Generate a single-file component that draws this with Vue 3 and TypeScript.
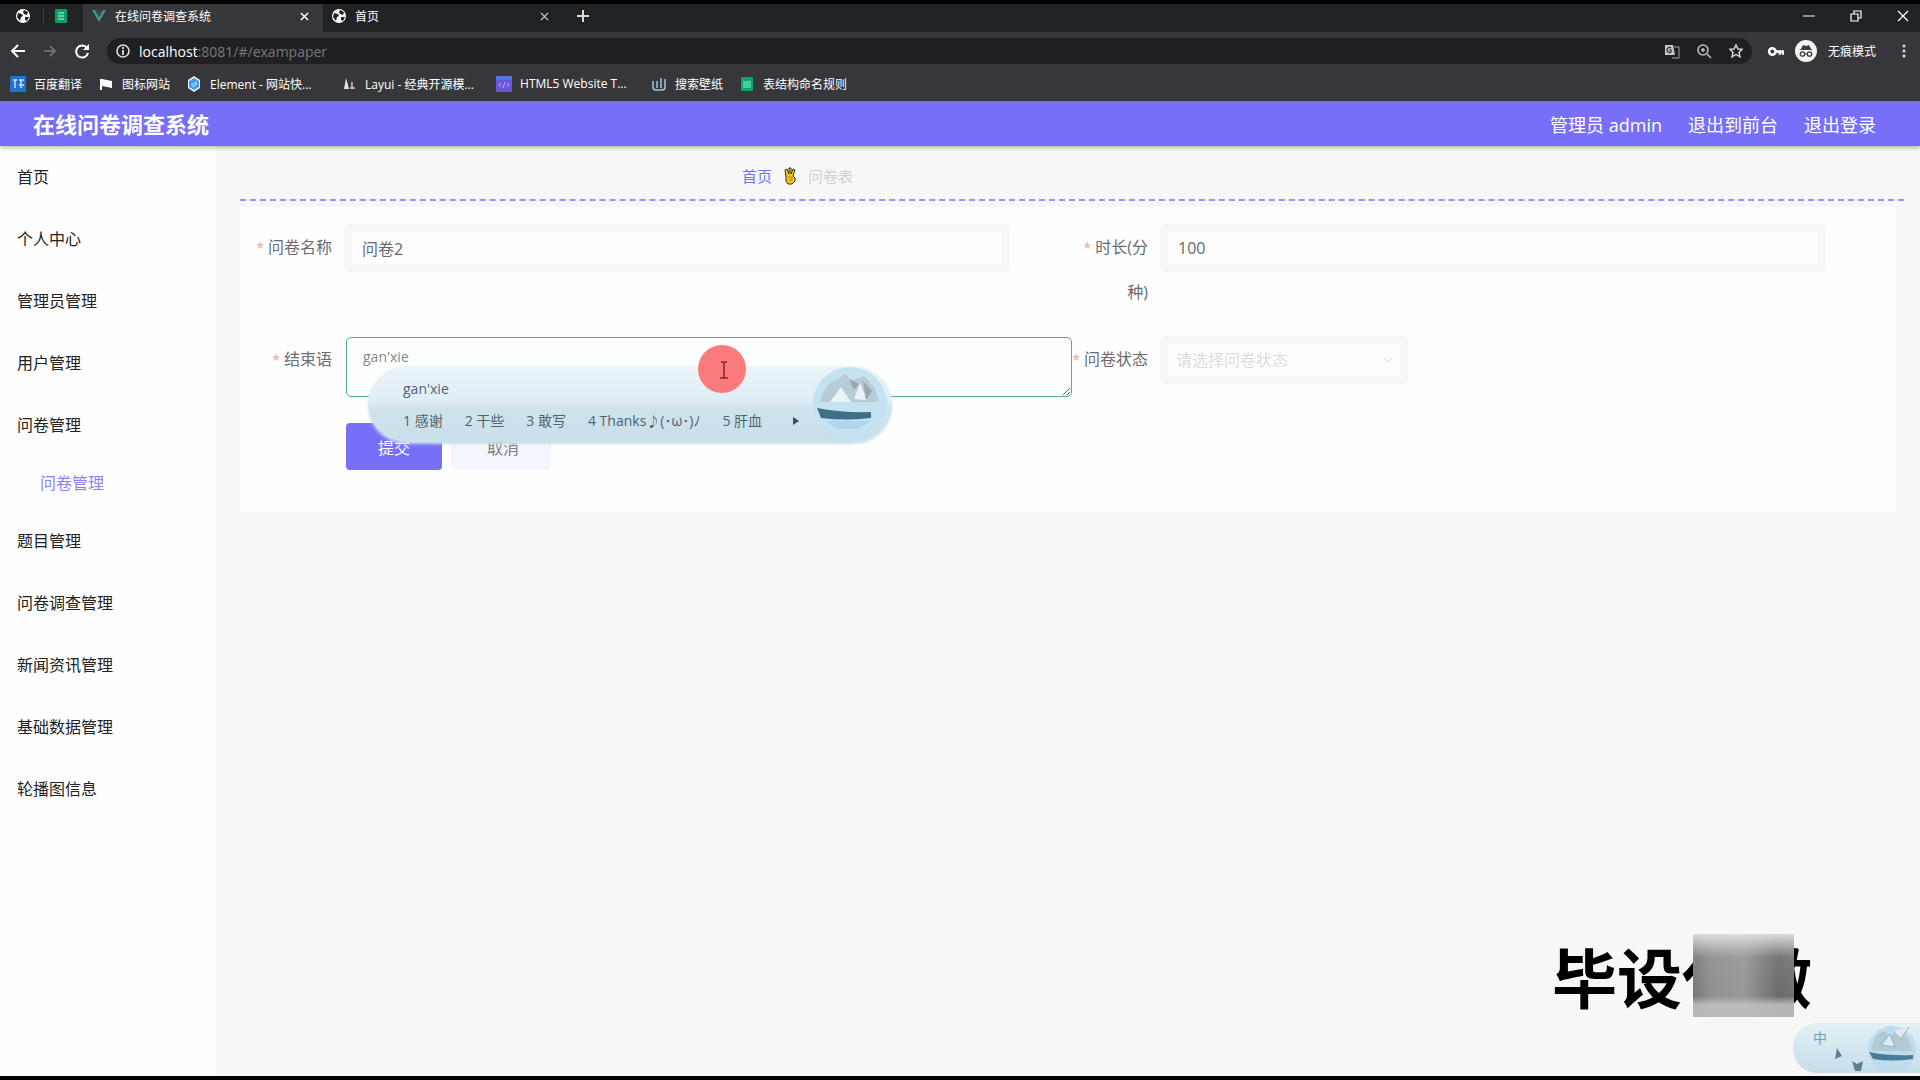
<script setup lang="ts">
import { ref } from 'vue'

interface MenuItem {
  label: string
  sub?: boolean
}
interface Bookmark {
  label: string
  icon: string
  long?: boolean
}

const menu: MenuItem[] = [
  { label: '首页' },
  { label: '个人中心' },
  { label: '管理员管理' },
  { label: '用户管理' },
  { label: '问卷管理' },
  { label: '问卷管理', sub: true },
  { label: '题目管理' },
  { label: '问卷调查管理' },
  { label: '新闻资讯管理' },
  { label: '基础数据管理' },
  { label: '轮播图信息' },
]

const bookmarks: Bookmark[] = [
  { label: '百度翻译', icon: 'baidu' },
  { label: '图标网站', icon: 'flag' },
  { label: 'Element - 网站快...', icon: 'element', long: true },
  { label: 'Layui - 经典开源模...', icon: 'layui', long: true },
  { label: 'HTML5 Website T...', icon: 'html', long: true },
  { label: '搜索壁纸', icon: 'wall' },
  { label: '表结构命名规则', icon: 'sheet' },
]

const candidates: string[] = ['感谢', '干些', '敢写', 'Thanks♪(･ω･)ﾉ', '肝血']

const paperName = ref('问卷2')
const minutes = ref('100')
const closing = ref("gan'xie")
const state = ref('')
</script>

<template>
  <div class="screen">
    <div class="browser">
      <div class="tabs">
        <span class="pin">
          <svg class="ico" viewBox="0 0 16 16"><circle cx="8" cy="8" r="7" fill="#fff" /><path d="M3 5l4 1 1 2-2 1-1 4-3-4zM9 2l4 2-1 3-3-1-1-2zM10 9l4 0-2 4-2-1z" fill="#222" /></svg>
        </span>
        <span class="pin second">
          <svg class="ico" viewBox="0 0 16 16"><rect x="2" y="1" width="12" height="14" rx="1" fill="#0b9d63" /><path d="M5 5h6M5 8h6M5 11h6" stroke="#7be0b5" stroke-width="1.5" /></svg>
        </span>
        <div class="tab active">
          <svg class="ico" viewBox="0 0 16 16"><path d="M1 2h3l4 7 4-7h3L8 14z" fill="#41987a" /><path d="M4 2h3l1 2 1-2h3L8 9z" fill="#35495e" /></svg>
          <span class="tab-title">在线问卷调查系统</span>
          <svg class="close" viewBox="0 0 10 10"><path d="M1 1l8 8M9 1l-8 8" stroke="#fff" stroke-width="1.6" /></svg>
        </div>
        <div class="tab">
          <svg class="ico" viewBox="0 0 16 16"><circle cx="8" cy="8" r="7" fill="#fff" /><path d="M3 5l4 1 1 2-2 1-1 4-3-4zM9 2l4 2-1 3-3-1-1-2zM10 9l4 0-2 4-2-1z" fill="#222" /></svg>
          <span class="tab-title">首页</span>
          <svg class="close" viewBox="0 0 10 10"><path d="M1 1l8 8M9 1l-8 8" stroke="#ccc" stroke-width="1.4" /></svg>
        </div>
        <svg class="plus" viewBox="0 0 12 12"><path d="M6 0v12M0 6h12" stroke="#ddd" stroke-width="2" /></svg>
        <div class="win">
          <svg viewBox="0 0 12 12"><path d="M0 6h12" stroke="#fff" /></svg>
          <svg viewBox="0 0 12 12"><path d="M1 4h7v7H1zM4 4V1h7v7H8" fill="none" stroke="#fff" stroke-width="1.2" /></svg>
          <svg viewBox="0 0 12 12"><path d="M1 1l10 10M11 1L1 11" stroke="#fff" stroke-width="1.3" /></svg>
        </div>
      </div>

      <div class="toolbar">
        <div class="nav">
          <svg viewBox="0 0 16 16"><path d="M15 8H2M8 2L2 8l6 6" fill="none" stroke="#fff" stroke-width="2" /></svg>
          <svg viewBox="0 0 16 16"><path d="M2 8h11M8 3l5 5-5 5" fill="none" stroke="#77797c" stroke-width="1.6" /></svg>
          <svg viewBox="0 0 16 16"><path d="M13 5a6 6 0 1 0 1 5" fill="none" stroke="#fff" stroke-width="2" /><path d="M15 1v6H9z" fill="#fff" /></svg>
        </div>
        <div class="omnibox">
          <svg class="info" viewBox="0 0 16 16"><circle cx="8" cy="8" r="6" fill="none" stroke="#ddd" stroke-width="1.6" /><path d="M8 7v5M8 4v2" stroke="#ddd" stroke-width="1.8" /></svg>
          <span class="url"><b>localhost</b>:8081/#/exampaper</span>
          <div class="actions">
            <svg viewBox="0 0 16 16"><path d="M1 2h8l2 10H1z" fill="#c4c5c7" /><path d="M10 4h5v11H8" fill="none" stroke="#a5a6a8" /><path d="M7 5a2.500 2.500 0 1 0 0 4V7H5" fill="none" stroke="#2a2a2e" stroke-width="1.200" /></svg>
            <svg viewBox="0 0 16 16"><circle cx="7" cy="7" r="5" fill="none" stroke="#bbb" stroke-width="1.6" /><path d="M11 11l4 4M5 7h4M7 5v4" stroke="#bbb" stroke-width="1.6" /></svg>
            <svg viewBox="0 0 16 16"><path d="M8 2l2 4 4 .4-3 3.100 1 4.300L8 11.500l-4 2.300 1-4.300-3-3.100L6 6z" fill="none" stroke="#ddd" stroke-width="1.4" /></svg>
          </div>
        </div>
        <div class="profile">
          <svg class="key" viewBox="0 0 16 16"><circle cx="5" cy="8" r="3" fill="none" stroke="#fff" stroke-width="2.4" /><path d="M8 8h7v3M12 8v3" fill="none" stroke="#fff" stroke-width="2.200" /></svg>
          <svg class="spy" viewBox="0 0 22 22"><circle cx="11" cy="11" r="11" fill="#f4f4f4" /><path d="M4 10h14l-2-1-2-4-3 1-3-1-2 4z" fill="#3a3b3f" /><circle cx="7.500" cy="14" r="2.200" fill="none" stroke="#3a3b3f" stroke-width="1.300" /><circle cx="14.500" cy="14" r="2.200" fill="none" stroke="#3a3b3f" stroke-width="1.300" /><path d="M10 14h2" stroke="#3a3b3f" /></svg>
          <span>无痕模式</span>
          <svg class="dots" viewBox="0 0 16 16"><circle cx="8" cy="3" r="1.500" fill="#ddd" /><circle cx="8" cy="8" r="1.500" fill="#ddd" /><circle cx="8" cy="13" r="1.500" fill="#ddd" /></svg>
        </div>
      </div>

      <nav class="bookmarks">
        <a v-for="b in bookmarks" :key="b.label" href="#" class="bookmark">
          <svg class="ico" viewBox="0 0 16 16">
            <g v-if="b.icon === 'baidu'"><rect width="16" height="16" rx="1" fill="#1f74d0" /><path d="M3 4h4M5 4v8M9 4h5M11 4v8M9 9h5" stroke="#cfe6ff" stroke-width="1.400" /></g>
            <path v-else-if="b.icon === 'flag'" d="M2 3h2l5 1 5 1v7l-5-1-5-1v4H2z" fill="#fff" />
            <g v-else-if="b.icon === 'element'"><path d="M8 0l6 4v8l-6 4-6-4V4z" fill="#eaf5ff" /><path d="M8 2l5 3v6l-5 3-5-3V5z" fill="#3f9bef" /><path d="M5 9l6-3M6 11l5-3" stroke="#d8ecff" /></g>
            <g v-else-if="b.icon === 'layui'"><path d="M5 2l3 11H3z" fill="#e6e6e6" /><path d="M11 6v7M9 12h5" fill="none" stroke="#ccc" stroke-width="1.500" /></g>
            <g v-else-if="b.icon === 'html'"><rect width="16" height="16" fill="#6b55dd" /><rect width="16" height="4" fill="#4d7be0" /><path d="M5 7l-2 2 2 2M11 7l2 2-2 2M9 6l-2 6" fill="none" stroke="#b9adff" /></g>
            <path v-else-if="b.icon === 'wall'" d="M2 5v6q0 3 3 3h6q3 0 3-3V3M6 5v7M10 2v10" fill="none" stroke="#a9c3dd" stroke-width="1.500" />
            <g v-else><rect x="2" y="1" width="12" height="14" rx="1" fill="#0fa76c" /><rect x="4" y="5" width="8" height="7" fill="#43cf9a" /></g>
          </svg>
          <span :class="{ long: b.long }">{{ b.label }}</span>
        </a>
      </nav>
    </div>

    <header class="header">
      <h1>在线问卷调查系统</h1>
      <div class="links">
        <span>管理员 admin</span>
        <a href="#">退出到前台</a>
        <a href="#">退出登录</a>
      </div>
    </header>

    <div class="body">
      <aside class="sidebar">
        <a v-for="(m, i) in menu" :key="i" href="#" :class="{ sub: m.sub }">{{ m.label }}</a>
      </aside>

      <main class="main">
        <div class="crumbs">
          <a href="#">首页</a>
          <svg viewBox="0 0 12 18"><path d="M2 10L1 3l2-1 2 5V1h2l0 6 2-5 2 1-2 6 2 2v3l-3 3H4l-2-3z" fill="#f5c518" stroke="#3b3210" /><path d="M4 10h4v3H5" fill="none" stroke="#a8871a" /></svg>
          <span>问卷表</span>
        </div>

        <form class="card" @submit.prevent>
          <div class="row">
            <div class="item">
              <label for="name"><i>*</i>问卷名称</label>
              <div class="field"><input id="name" v-model="paperName" type="text" /></div>
            </div>
            <div class="item">
              <label for="time"><i>*</i>时长(分<br />种)</label>
              <div class="field"><input id="time" v-model="minutes" type="text" /></div>
            </div>
          </div>
          <div class="row">
            <div class="item">
              <label for="closing"><i>*</i>结束语</label>
              <div class="field area">
                <textarea id="closing" v-model="closing"></textarea>
                <div class="ime">
                  <div class="typed">gan'xie</div>
                  <div class="cands">
                    <span v-for="(c, i) in candidates" :key="c">{{ i + 1 }} {{ c }}</span>
                    <svg class="next" viewBox="0 0 8 10"><path d="M1 1l6 4-6 4z" fill="#33515f" /></svg>
                  </div>
                  <svg class="skin" viewBox="0 0 76 76"><circle cx="38" cy="38" r="37" fill="#c5e2f1" /><path d="M8 36q5-20 17-22l8-6 7 7 12-5q12 10 15 26z" fill="#b9cbd5" /><path d="M18 36l11-15 10 15zM42 33l6-16 7 17z" fill="#e9f3f8" /><path d="M37 13l10 5-5 6zM51 15l9 10-6 9z" fill="#94a9b4" /><path d="M5 42q24 5 54 4v6q-26 3-50 0z" fill="#416f87" /><path d="M14 55h44l-11 8H24z" fill="#b0d6ed" /></svg>
                </div>
                <svg class="pointer" viewBox="0 0 48 48"><circle cx="24" cy="24" r="24" fill="#fb7a7b" /><path d="M23 17h2l1 1 1-1h2M26 18v15M22 33h8" fill="none" stroke="#7b2a30" stroke-width="1.500" /></svg>
              </div>
            </div>
            <div class="item">
              <label for="state"><i>*</i>问卷状态</label>
              <div class="field pick">
                <select id="state" v-model="state">
                  <option value="">请选择问卷状态</option>
                </select>
                <svg viewBox="0 0 10 6"><path d="M1 1l4 4 4-4" fill="none" stroke="#d8d8da" /></svg>
              </div>
            </div>
          </div>
          <div class="buttons">
            <button type="submit" class="primary">提交</button>
            <button type="button" class="plain">取消</button>
          </div>
        </form>
      </main>
    </div>

    <div class="watermark">毕设代做<span class="mosaic"></span></div>

    <div class="ime-status">
      <span>中</span>
      <svg viewBox="0 0 90 48"><path d="M10 25l5 8-7 3zM25 38l5 3 6-3-2 10h-6z" fill="#5f7f90" /><circle cx="65" cy="27" r="24" fill="#bfdced" /><path d="M44 28q2-15 12-20l8 5 9-7q10 8 12 22z" fill="#b2c9d6" /><path d="M54 22l9-11 5 13zM66 8l8 8 8-12" fill="#dceaf2" stroke="#93aebe" /><path d="M42 29q20 4 44 3v4q-22 3-40 0z" fill="#4a7c96" /></svg>
    </div>
  </div>
</template>

<style>
body {
  margin: 0;
  background: #f7f7f7;
}
</style>

<style scoped>
* {
  box-sizing: border-box;
}
.screen {
  position: relative;
  display: flex;
  flex-direction: column;
  min-height: 100vh;
  border-top: 4px solid #000;
  border-bottom: 4px solid #000;
  background: #f7f7f7;
  font-family: "Open Sans", "Noto Sans CJK SC", sans-serif;
  font-size: 16px;
  overflow: hidden;
}
a {
  text-decoration: none;
  color: inherit;
}
svg {
  display: block;
  flex: none;
}
.browser {
  background: #37373b;
  color: #fff;
  font-size: 12px;
}
.ico {
  width: 16px;
  height: 16px;
}
.tabs {
  display: flex;
  align-items: center;
  height: 28px;
  padding: 0 11px 4px 15px;
  background: #1f2325;
}
.pin {
  padding-right: 12px;
  border-right: 1px solid #3a3d40;
}
.pin.second {
  padding: 0 14px 0 9px;
  border: 0;
}
.tab {
  display: flex;
  align-items: center;
  gap: 8px;
  width: 240px;
  height: 28px;
  padding: 0 14px 4px 8px;
  margin-top: 4px;
}
.tab.active {
  background: #36373a;
}
.tab-title {
  flex: 1;
}
.close {
  width: 9px;
  height: 9px;
}
.plus {
  width: 12px;
  height: 12px;
  margin-left: 14px;
}
.win {
  display: flex;
  gap: 35px;
  margin-left: auto;
}
.win svg {
  width: 12px;
  height: 12px;
}
.toolbar {
  display: flex;
  align-items: center;
  height: 34px;
  padding: 4px 8px 0;
}
.nav {
  display: flex;
  gap: 16px;
  width: 99px;
  padding-left: 2px;
}
.nav svg,
.info,
.actions svg {
  width: 16px;
  height: 16px;
}
.omnibox {
  display: flex;
  align-items: center;
  flex: 1;
  gap: 8px;
  height: 26px;
  padding: 0 8px;
  border-radius: 13px;
  background: #202024;
}
.url {
  flex: 1;
  font-size: 14px;
  color: #77787c;
}
.url b {
  font-weight: 400;
  color: #fff;
}
.actions {
  display: flex;
  gap: 16px;
}
.profile {
  display: flex;
  align-items: center;
  width: 160px;
  padding-left: 15px;
  gap: 11px;
}
.key {
  width: 17px;
  height: 17px;
}
.spy {
  width: 22px;
  height: 22px;
}
.dots {
  width: 16px;
  height: 16px;
  margin-left: auto;
}
.bookmarks {
  display: flex;
  align-items: center;
  gap: 16px;
  height: 35px;
  padding-left: 10px;
}
.bookmark {
  display: flex;
  align-items: center;
  gap: 8px;
  white-space: nowrap;
}
.long {
  width: 115px;
}
.header {
  position: relative;
  display: flex;
  align-items: center;
  justify-content: space-between;
  height: 45px;
  padding: 0 44px 0 33px;
  background: #776ff8;
  color: #fff;
  box-shadow: 0 2px 4px rgba(90, 100, 70, 0.4);
}
.header h1 {
  margin: 0;
  font-size: 22px;
  line-height: 32px;
}
.links {
  display: flex;
  gap: 26px;
  font-size: 18px;
}
.body {
  display: flex;
  flex: 1;
}
.sidebar {
  display: flex;
  flex-direction: column;
  width: 216px;
  background: #fefefe;
}
.sidebar a {
  padding-left: 17px;
  line-height: 62px;
  color: #222;
}
.sidebar a.sub {
  padding-left: 40px;
  line-height: 54px;
  color: #8b80fa;
}
.main {
  flex: 1;
  padding: 0 16px 0 24px;
}
.crumbs {
  display: flex;
  align-items: center;
  gap: 12px;
  height: 55px;
  padding: 6px 0 0 502px;
  border-bottom: 2px dashed #9a92ee;
  font-size: 15px;
  color: #cfcfd6;
}
.crumbs a {
  color: #776ff8;
}
.crumbs svg {
  width: 12px;
  height: 18px;
}
.card {
  margin: 6px 8px 0 0;
  padding: 17px 12px 42px;
  background: #fefefe;
}
.row {
  display: flex;
  margin-bottom: 22px;
}
.item {
  display: flex;
  flex: 1;
  align-items: flex-start;
}
label {
  width: 92px;
  padding: 1px 12px 0 0;
  line-height: 44px;
  text-align: right;
  white-space: nowrap;
  color: #6a6c70;
}
label i {
  margin-right: 4px;
  font-style: normal;
  font-size: 14px;
  color: #f0a0a0;
}
.field {
  position: relative;
  flex: 1;
}
input,
select {
  display: block;
  width: 92%;
  height: 48px;
  padding: 0 10px;
  border: 8px solid #f7f7f7;
  border-radius: 4px;
  background: #fefefe;
  font: inherit;
  color: #66686c;
  outline: 0;
}
.pick {
  max-width: 248px;
}
select {
  width: 100%;
  padding: 0 8px;
  appearance: none;
  color: #dcdcde;
}
.pick svg {
  position: absolute;
  right: 15px;
  top: 21px;
  width: 10px;
  height: 6px;
}
.area {
  padding: 1px 0 0 2px;
}
textarea {
  display: block;
  width: calc(100% + 4px);
  height: 60px;
  padding: 8px 16px;
  border: 1px solid #4fae94;
  border-radius: 5px;
  background: #fdfffe;
  font: inherit;
  font-size: 14px;
  line-height: 22px;
  color: #85878a;
  outline: 0;
  resize: vertical;
}
.ime {
  position: absolute;
  z-index: 2;
  left: 24px;
  top: 30px;
  width: 524px;
  height: 76px;
  padding: 10px 0 0 35px;
  border-radius: 38px;
  background: linear-gradient(#ebf4f8, #dfeef5 45%, #cfe3ec 55%, #c9dfe9);
  box-shadow: 0 2px 3px #c5e0ea;
  font-size: 14px;
  line-height: 26px;
  color: #4d6470;
}
.cands {
  display: flex;
  align-items: center;
  gap: 22px;
  margin-top: 6px;
  white-space: nowrap;
}
.next {
  width: 8px;
  height: 10px;
  margin-left: 8px;
}
.skin {
  position: absolute;
  right: 4px;
  top: 0;
  width: 76px;
  height: 76px;
}
.pointer {
  position: absolute;
  z-index: 3;
  left: 354px;
  top: 9px;
  width: 48px;
  height: 48px;
}
.buttons {
  display: flex;
  gap: 9px;
  padding: 4px 0 0 94px;
}
button {
  height: 47px;
  border: 0;
  border-radius: 4px;
  font: inherit;
}
.primary {
  width: 96px;
  background: #776ff8;
  color: #fff;
}
.plain {
  width: 100px;
  padding-left: 36px;
  text-align: left;
  background: #f3f6fd;
  color: #7a7c82;
}
.watermark {
  position: absolute;
  right: 108px;
  bottom: 52px;
  font-size: 65px;
  font-weight: 700;
  line-height: 92px;
  color: #000;
}
.mosaic {
  position: absolute;
  right: 18px;
  top: 2px;
  width: 101px;
  height: 83px;
  background:
    linear-gradient(rgba(230, 230, 230, 0.9), rgba(170, 170, 170, 0.2) 28%, rgba(150, 150, 150, 0) 75%, rgba(190, 190, 190, 0.9) 85%),
    linear-gradient(90deg, #777, #929292 20%, #999 50%, #6a6a6a 85%, #727272);
}
.ime-status {
  position: absolute;
  right: 0;
  bottom: 3px;
  display: flex;
  width: 127px;
  height: 50px;
  padding-left: 20px;
  border-radius: 24px 0 0 24px;
  background: linear-gradient(#e3f1f4, #c5ddec);
  font-size: 14px;
  line-height: 30px;
  color: #7f9aa8;
}
.ime-status svg {
  width: 90px;
  height: 48px;
}
</style>
